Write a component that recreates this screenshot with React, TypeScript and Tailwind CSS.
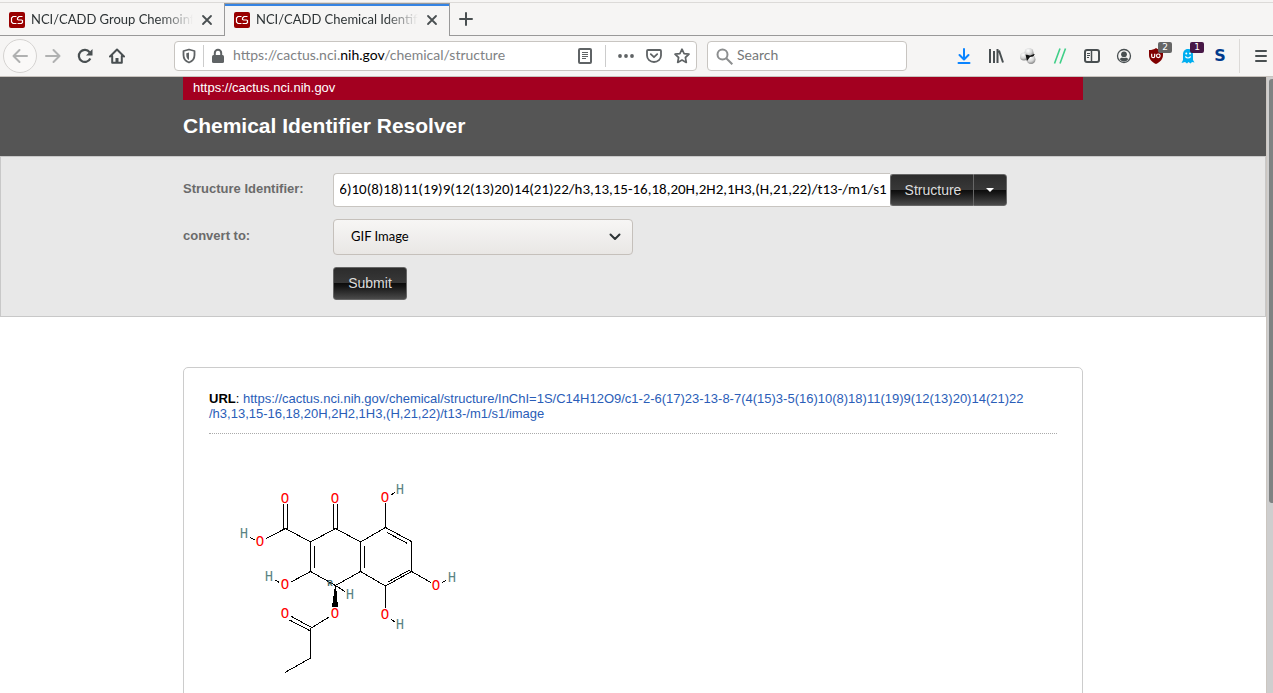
import { useLayoutEffect, useRef, useState, type ReactNode } from "react";

const INCHI =
  "InChI=1S/C14H12O9/c1-2-6(17)23-13-8-7(4(15)3-5(16)10(8)18)11(19)9(12(13)20)14(21)22/h3,13,15-16,18,20H,2H2,1H3,(H,21,22)/t13-/m1/s1";

const UI_FONT = "font-['Lato',sans-serif]";

function ToolButton({ label, children }: { label: string; children: ReactNode }) {
  return (
    <button type="button" aria-label={label} className="relative flex h-8 w-8 shrink-0 items-center justify-center text-[#494f51]">
      {children}
    </button>
  );
}

function Favicon() {
  return (
    <svg width="16" height="16" viewBox="0 0 16 16" className="shrink-0" aria-hidden="true">
      <rect width="16" height="16" rx="2" fill="#990000" />
      <path d="M7.500 4.500H4L2.500 6v4L4 11.500h3.500M13.500 4.500H10L8.500 6v1.500l1 .5h3l1 .5v2l-1 1H8.500" fill="none" stroke="#fff" strokeWidth="1.200" />
    </svg>
  );
}

function CloseIcon() {
  return (
    <svg width="12" height="12" viewBox="0 0 12 12" fill="none" stroke="#494f51" strokeWidth="1.800" strokeLinecap="round" aria-hidden="true">
      <path d="M2 2l8 8M10 2l-8 8" />
    </svg>
  );
}

function Tab({ title, active }: { title: string; active?: boolean }) {
  return (
    <div
      className={
        active
          ? "flex h-[33px] w-[226px] shrink-0 border-x border-t border-[#999] bg-[#f6f5f4]"
          : "flex h-[33px] w-56 shrink-0 border-b border-[#999]"
      }
    >
      <div className={active ? "flex min-w-0 flex-1 items-center border-t-2 border-[#3584e4] pr-[7px] pb-[2px] pl-[9px]" : "flex min-w-0 flex-1 items-center pt-[2px] pr-[7px] pl-[9px]"}>
        <Favicon />
        <button
          type="button"
          className="ml-[6px] min-w-0 flex-1 overflow-hidden pb-[2px] text-left text-[13px] leading-5 whitespace-nowrap text-[#2e3436] [mask-image:linear-gradient(to_right,#000_80%,transparent_100%)]"
        >
          {title}
        </button>
        <button type="button" aria-label="Close tab" className="ml-1 flex h-5 w-5 shrink-0 items-center justify-center">
          <CloseIcon />
        </button>
      </div>
    </div>
  );
}

function TabBar() {
  return (
    <div className="border-t border-[#dcdad8]">
      <div className="flex">
        <Tab title="NCI/CADD Group Chemoinformatics" />
        <Tab title="NCI/CADD Chemical Identifier Resolver" active />
        <div className="flex flex-1 items-center border-b border-[#999] pl-2">
          <button type="button" aria-label="New tab" className="flex h-4 w-4 items-center justify-center">
            <svg width="14" height="14" viewBox="0 0 14 14" fill="none" stroke="#494f51" strokeWidth="2" strokeLinecap="round" aria-hidden="true">
              <path d="M7 1v12M1 7h12" />
            </svg>
          </button>
        </div>
      </div>
    </div>
  );
}

function AddressBar() {
  return (
    <div className="flex h-[30px] w-[523px] min-w-0 items-center rounded-[4px] border border-[#c8c5c1] bg-white text-[#5f6365]">
      <button type="button" aria-label="Tracking protection" className="flex h-full w-7 shrink-0 items-center justify-center">
        <svg width="14" height="16" viewBox="0 0 14 16" fill="none" aria-hidden="true">
          <path d="M7 1.500L1.500 3v4c0 4 2.500 6.500 5.500 7.500 3-1 5.500-3.500 5.500-7.500V3z" stroke="currentColor" strokeWidth="1.800" strokeLinejoin="round" />
          <path d="M7 4.500v7.500C5.200 11 4.300 9.500 4.300 7V5.200z" fill="currentColor" />
        </svg>
      </button>
      <span className="h-[22px] w-px shrink-0 bg-[#ccc]" />
      <button type="button" aria-label="Site security" className="flex h-full w-7 shrink-0 items-center justify-center">
        <svg width="14" height="16" viewBox="0 0 14 16" aria-hidden="true">
          <rect x="1" y="7" width="12" height="8" rx="1.500" fill="currentColor" />
          <path d="M3.800 8V5a3.200 3.200 0 016.400 0v3" fill="none" stroke="currentColor" strokeWidth="2" />
        </svg>
      </button>
      <span className="ml-px min-w-0 flex-1 truncate pb-[2px] text-[14px] leading-5 text-[#808284]">
        https://cactus.nci.<span className="text-black">nih.gov</span>/chemical/structure
      </span>
      <button type="button" aria-label="Reader view" className="flex h-full w-10 shrink-0 items-center justify-center">
        <svg width="14" height="16" viewBox="0 0 14 16" fill="none" stroke="currentColor" aria-hidden="true">
          <rect x="1" y="1" width="12" height="14" rx="1" strokeWidth="2" />
          <path d="M4 4.500h6M4 6.500h6M4 8.500h6M4 10.500h4" strokeWidth="1" />
        </svg>
      </button>
      <span className="h-[22px] w-px shrink-0 bg-[#ccc]" />
      <button type="button" aria-label="Page actions" className="ml-[6px] flex h-full w-7 shrink-0 items-center justify-center">
        <svg width="16" height="16" viewBox="0 0 16 16" fill="currentColor" aria-hidden="true">
          <circle cx="2" cy="8" r="1.900" />
          <circle cx="8" cy="8" r="1.900" />
          <circle cx="14" cy="8" r="1.900" />
        </svg>
      </button>
      <button type="button" aria-label="Save to Pocket" className="flex h-full w-7 shrink-0 items-center justify-center">
        <svg width="16" height="16" viewBox="0 0 16 16" fill="none" stroke="currentColor" strokeWidth="1.800" strokeLinecap="round" strokeLinejoin="round" aria-hidden="true">
          <path d="M2 2h12a1 1 0 011 1v4.500a7 6.500 0 01-14 0V3a1 1 0 011-1z" />
          <path d="M4.800 6.200L8 9.200l3.200-3" />
        </svg>
      </button>
      <button type="button" aria-label="Bookmark this page" className="flex h-full w-7 shrink-0 items-center justify-center">
        <svg width="16" height="16" viewBox="0 0 16 16" fill="none" stroke="currentColor" strokeWidth="1.700" strokeLinejoin="round" aria-hidden="true">
          <path d="M8 1.200l2.100 4.400 4.900.6-3.600 3.300.9 4.900L8 12l-4.300 2.400.9-4.900L1 6.200l4.900-.6z" />
        </svg>
      </button>
    </div>
  );
}

function Toolbar() {
  return (
    <div className="flex h-[41px] items-center border-b border-[#c8c3be] pl-[3px]">
      <button type="button" aria-label="Back" className="flex h-[34px] w-[34px] shrink-0 items-center justify-center rounded-full border border-[#d5d3d1] bg-[#faf9f8] text-[#b0b1b1]">
        <svg width="16" height="16" viewBox="0 0 16 16" fill="none" stroke="currentColor" strokeWidth="2" strokeLinecap="round" strokeLinejoin="round" aria-hidden="true">
          <path d="M15 8H1.500M7.500 2l-6 6 6 6" />
        </svg>
      </button>
      <button type="button" aria-label="Forward" className="flex h-8 w-8 shrink-0 items-center justify-center text-[#b0b1b1]">
        <svg width="16" height="16" viewBox="0 0 16 16" fill="none" stroke="currentColor" strokeWidth="2" strokeLinecap="round" strokeLinejoin="round" aria-hidden="true">
          <path d="M1 8h13.500M8.500 2l6 6-6 6" />
        </svg>
      </button>
      <ToolButton label="Reload">
        <svg width="16" height="16" viewBox="0 0 16 16" aria-hidden="true">
          <path d="M13.300 10.500A6 6 0 1112.600 4.200" fill="none" stroke="currentColor" strokeWidth="2.200" />
          <path d="M15.500 1v6.500H9z" fill="currentColor" />
        </svg>
      </ToolButton>
      <ToolButton label="Home">
        <svg width="16" height="16" viewBox="0 0 16 16" fill="none" stroke="currentColor" strokeWidth="2" strokeLinecap="round" strokeLinejoin="round" aria-hidden="true">
          <path d="M1 8.500L8 1.500l7 7M3.200 8v6.800h9.600V8" />
          <path d="M8 10v4.500" strokeWidth="3" strokeLinecap="butt" />
        </svg>
      </ToolButton>
      <div className="flex min-w-0 flex-1 items-center pl-[41px]">
        <AddressBar />
        <label className="ml-[10px] flex h-[30px] w-[200px] shrink-0 items-center rounded-[4px] border border-[#c8c5c1] bg-white pl-2">
          <svg width="17" height="17" viewBox="0 0 17 17" fill="none" stroke="#8c8e8f" strokeWidth="2" className="shrink-0" aria-hidden="true">
            <circle cx="6.500" cy="6.500" r="5" />
            <path d="M10 10l6.300 6.300" />
          </svg>
          <input
            type="text"
            aria-label="Search"
            placeholder="Search"
            className="ml-1 w-full min-w-0 bg-transparent pb-[2px] text-[14px] leading-5 outline-none placeholder:text-[#757779]"
          />
        </label>
      </div>
      <ToolButton label="Downloads">
        <svg width="16" height="16" viewBox="0 0 16 16" fill="none" stroke="#0a84ff" strokeWidth="2" strokeLinecap="round" strokeLinejoin="round" aria-hidden="true">
          <path d="M8 1v10M3.500 7L8 11.500 12.500 7M2.500 15h11" />
        </svg>
      </ToolButton>
      <ToolButton label="Library">
        <svg width="16" height="16" viewBox="0 0 16 16" fill="none" stroke="currentColor" strokeWidth="2" aria-hidden="true">
          <path d="M2 1v14M6 3v12M9.500 1v14M11 2.500l4 12" />
        </svg>
      </ToolButton>
      <ToolButton label="Molecule viewer">
        <svg width="16" height="16" viewBox="0 0 16 16" aria-hidden="true">
          <defs>
            <radialGradient id="ball" cx="40%" cy="30%" r="70%">
              <stop offset="0" stopColor="#fff" />
              <stop offset="0.600" stopColor="#d4d4d4" />
              <stop offset="1" stopColor="#888" />
            </radialGradient>
          </defs>
          <circle cx="9" cy="8" r="5" fill="#222" />
          <circle cx="9" cy="4.500" r="4.500" fill="url(#ball)" />
          <circle cx="4" cy="8.500" r="4" fill="url(#ball)" />
          <circle cx="11" cy="11.500" r="4.500" fill="url(#ball)" />
          <path d="M5.500 6.500l4.500 1 5-1.500-2 2.500-3 .5-3 4z" fill="#111" />
        </svg>
      </ToolButton>
      <ToolButton label="Double slash">
        <svg width="16" height="16" viewBox="0 0 16 16" fill="none" stroke="#40cf88" strokeWidth="1.600" aria-hidden="true">
          <path d="M2.500 15.500L8 .5M8 15.500L13.500 .5" />
        </svg>
      </ToolButton>
      <ToolButton label="Sidebars">
        <svg width="16" height="14" viewBox="0 0 16 14" fill="none" stroke="currentColor" aria-hidden="true">
          <rect x="1" y="1" width="14" height="12" rx="2" strokeWidth="2" />
          <path d="M7.500 1v12" strokeWidth="1.500" />
          <path d="M3 4.500h3M3 6.500h3M3 8.500h2" strokeWidth="1" />
        </svg>
      </ToolButton>
      <ToolButton label="Account">
        <svg width="16" height="16" viewBox="0 0 16 16" aria-hidden="true">
          <circle cx="8" cy="8" r="6.500" fill="none" stroke="currentColor" strokeWidth="1.300" />
          <circle cx="8" cy="6.300" r="2.900" fill="currentColor" />
          <path d="M3.500 11q1-1 2.500-1.500 2 1 4 0 1.500.5 2.500 1.500-2 2.500-4.500 2.500T3.500 11z" fill="currentColor" />
        </svg>
      </ToolButton>
      <ToolButton label="Content blocker">
        <svg width="16" height="16" viewBox="0 0 16 16" aria-hidden="true">
          <path d="M8 0c2 1.400 4 2 7 2v5c0 4-2.500 7-7 9-4.500-2-7-5-7-9V2c3 0 5-.6 7-2z" fill="#800000" />
          <path d="M3.700 5.800v2.400a1.500 1.500 0 003 0V5.800" fill="none" stroke="#fff" strokeWidth="1.200" />
          <circle cx="10.300" cy="7.800" r="1.800" fill="none" stroke="#fff" strokeWidth="1.200" />
        </svg>
        <span className="absolute top-[2px] right-0 h-[11px] w-[14px] rounded-[2px] bg-[#666] text-center font-['DejaVu_Sans',sans-serif] text-[9px] leading-[11px] text-white">2</span>
      </ToolButton>
      <ToolButton label="Tracker blocker">
        <svg width="16" height="16" viewBox="0 0 16 16" aria-hidden="true">
          <path d="M8 1c3.500 0 5 2.500 5 5.500V12l1.500 2.500-2.500-.5-1.500 1.500L8.500 14 7 15.500 5 14l-3.500 1L3 12V6.500C3 3.500 4.500 1 8 1z" fill="#00aef0" />
          <circle cx="6.300" cy="5.500" r="1" fill="#fff" />
          <circle cx="10" cy="5.500" r="1" fill="#fff" />
          <path d="M5.300 8.500q2.700 3 5.400 0" fill="none" stroke="#fff" strokeWidth="1.200" />
        </svg>
        <span className="absolute top-[2px] right-0 h-[11px] w-[14px] rounded-[2px] bg-[#471846] text-center font-['DejaVu_Sans',sans-serif] text-[9px] leading-[11px] text-white">1</span>
      </ToolButton>
      <ToolButton label="Script extension">
        <span className="font-['DejaVu_Sans',sans-serif] text-[16px] leading-4 font-bold text-[#003a8c]">S</span>
      </ToolButton>
      <span className="mr-[9px] ml-[3px] h-[34px] w-px shrink-0 bg-[#dcdad8]" />
      <button type="button" aria-label="Menu" className="flex h-8 w-6 shrink-0 items-center justify-center text-[#494f51]">
        <svg width="12" height="14" viewBox="0 0 12 14" fill="none" stroke="currentColor" strokeWidth="2" strokeLinecap="round" aria-hidden="true">
          <path d="M1 2h10M1 7h10M1 12h10" />
        </svg>
      </button>
    </div>
  );
}

const DARK_BUTTON =
  "border border-[#666] bg-[linear-gradient(to_bottom,#2c2c2c_0%,#383838_49%,#0c0c0c_50%,#161616_60%,#4a4a4a_100%)] text-[14px] leading-5 text-[#dcdcdc]";

function ResolverForm() {
  const field = useRef<HTMLInputElement>(null);
  const [identifier, setIdentifier] = useState(INCHI);

  useLayoutEffect(() => {
    if (field.current) field.current.scrollLeft = field.current.scrollWidth;
  }, []);

  return (
    <div className="border border-[#c8c8c8] bg-[#e8e8e8] py-4">
      <form className="mx-auto flex max-w-[900px] flex-col gap-3" onSubmit={(e) => e.preventDefault()}>
        <div className="flex">
          <label htmlFor="identifier" className="w-[150px] shrink-0 pt-2 text-[13px] leading-4 font-bold text-[#6b6b6b]">
            Structure Identifier:
          </label>
          <input
            id="identifier"
            ref={field}
            type="text"
            value={identifier}
            onChange={(e) => setIdentifier(e.target.value)}
            className="h-[34px] w-[557px] min-w-0 rounded-l-[4px] border border-r-0 border-[#c8c5c1] bg-white pr-[3px] pb-[2px] pl-[6px] font-['Carlito','Lato',sans-serif] text-[15px] leading-5 text-black outline-none"
          />
          <div className="flex h-8 shrink-0 self-center">
            <button type="button" className={`${DARK_BUTTON} w-[83px] rounded-l-[3px] border-r-0 pl-[2px]`}>
              Structure
            </button>
            <button type="button" aria-label="Choose identifier type" className={`${DARK_BUTTON} flex w-[34px] items-center justify-center rounded-r-[3px]`}>
              <svg width="8" height="4" viewBox="0 0 8 4" aria-hidden="true">
                <path d="M0 0h8L4 4z" fill="#fff" />
              </svg>
            </button>
          </div>
        </div>
        <div className="flex">
          <label htmlFor="format" className="w-[150px] shrink-0 pt-[9px] text-[13px] leading-4 font-bold text-[#6b6b6b]">
            convert to:
          </label>
          <div className="relative w-[300px]">
            <select
              id="format"
              defaultValue="gif"
              className={`${UI_FONT} block h-9 w-full appearance-none rounded-[4px] border border-[#c5c0bb] bg-linear-to-b from-[#f7f6f5] to-[#e9e7e5] pb-[2px] pl-[17px] text-[13px] leading-5 text-black outline-none`}
            >
              <option value="gif">GIF Image</option>
              <option value="smiles">SMILES</option>
              <option value="sdf">SD File</option>
            </select>
            <svg width="12" height="8" viewBox="0 0 12 8" className="pointer-events-none absolute top-[14px] right-3" fill="none" stroke="#2e3436" strokeWidth="2" strokeLinecap="round" strokeLinejoin="round" aria-hidden="true">
              <path d="M1.500 1.500L6 6l4.500-4.500" />
            </svg>
          </div>
        </div>
        <div className="flex pl-[150px]">
          <button type="submit" className={`${DARK_BUTTON} h-[33px] w-[74px] rounded-[3px] pb-px`}>
            Submit
          </button>
        </div>
      </form>
    </div>
  );
}

const BONDS = [
  "M283.500 504V528.500M287.500 504V528.500M333.500 504V528.500M337.500 504V528.500",
  "M266 538.500L285.500 528.500L310.500 542L335.500 528.500L360.500 542V571.500L335.500 585.500L310.500 571.500V542",
  "M314.500 546V568M364.500 546V568M250 537.500L255 540",
  "M360.500 542L385.500 527.500L411.500 541.500V571.500L385.500 586L360.500 571.500",
  "M387 532.500L407.500 543.500M388 582L409.500 570",
  "M385.500 503V527.500M391 495L395 492.500",
  "M411.500 571.500L431 582.500M442 582.500L446 580.500",
  "M385.500 586V607.500M391 619.500L395 622",
  "M291 582L310.500 571.500M275 580L279.500 582.500M335.500 585.500L345 591.500",
  "M329 617L310.500 628.500V658L285 672.500M291.500 616.500L310.500 627M289.500 620L310.500 631",
];

const OXYGENS = [
  [285, 498], [335, 498], [260, 541], [285, 584], [385, 497], [436, 585], [385, 614], [335, 613], [285, 613],
];

const HYDROGENS = [
  [244, 533], [269, 576], [350, 594], [400, 489], [452, 577], [400, 624],
];

function Molecule() {
  return (
    <svg width="250" height="250" viewBox="225 455 250 250" role="img" aria-label="Chemical structure" className="ml-4">
      <path d={BONDS.join("")} fill="none" stroke="#000" strokeWidth="1" shapeRendering="crispEdges" />
      <path d="M335 585h1l2 22h-6z" fill="#000" shapeRendering="crispEdges" />
      <g fontFamily="'Liberation Mono', monospace" fontSize="14" textAnchor="middle">
        {OXYGENS.map(([x, y]) => (
          <text key={`o${x}-${y}`} x={x} y={y + 5} fill="#ff0000">O</text>
        ))}
        {HYDROGENS.map(([x, y]) => (
          <text key={`h${x}-${y}`} x={x} y={y + 5} fill="#5a8484">H</text>
        ))}
        <text x="330" y="586" fontSize="9" fontWeight="bold" fill="#3f6464">R</text>
      </g>
    </svg>
  );
}

function Result() {
  return (
    <div className="mx-auto mt-[50px] max-w-[900px] rounded-[5px] border border-[#ccc] px-[25px] pt-[23px] pb-6">
      <p className="border-b border-dotted border-[#aaa] pb-3 text-[13px] leading-[15px] text-black">
        <b>URL</b>:{" "}
        <a href="#image" className="text-[#2a5db8]">
          https://cactus.nci.nih.gov/chemical/structure/InChI=1S/C14H12O9/c1-2-6(17)23-13-8-7(4(15)3-5(16)10(8)18)11(19)9(12(13)20)14(21)22
          <br />
          /h3,13,15-16,18,20H,2H2,1H3,(H,21,22)/t13-/m1/s1/image
        </a>
      </p>
      <div className="pt-[21px]">
        <Molecule />
      </div>
    </div>
  );
}

export default function App() {
  return (
    <div className="flex h-screen flex-col overflow-hidden bg-white font-['Liberation_Sans',Arial,sans-serif]">
      <div className={`${UI_FONT} shrink-0 bg-[#f6f5f4] pt-[2px]`}>
        <TabBar />
        <Toolbar />
      </div>
      <div className="flex min-h-0 flex-1">
        <main className="min-w-0 flex-1 overflow-hidden">
          <header className="bg-[#555] pb-[17px] text-white">
            <div className="mx-auto max-w-[900px]">
              <div className="bg-[#a30020] px-[10px] pt-[3px] pb-1 text-[13px] leading-4">https://cactus.nci.nih.gov</div>
              <h1 className="pt-3 text-[21px] leading-[27px] font-bold">Chemical Identifier Resolver</h1>
            </div>
          </header>
          <ResolverForm />
          <Result />
        </main>
        <div className="w-[7px] shrink-0 border-l border-[#ccc6c0] bg-[#cecece] pt-[2px] pl-[2px]">
          <div className="h-[69%] rounded-l-[3px] bg-[#7f8282]" />
        </div>
      </div>
    </div>
  );
}
